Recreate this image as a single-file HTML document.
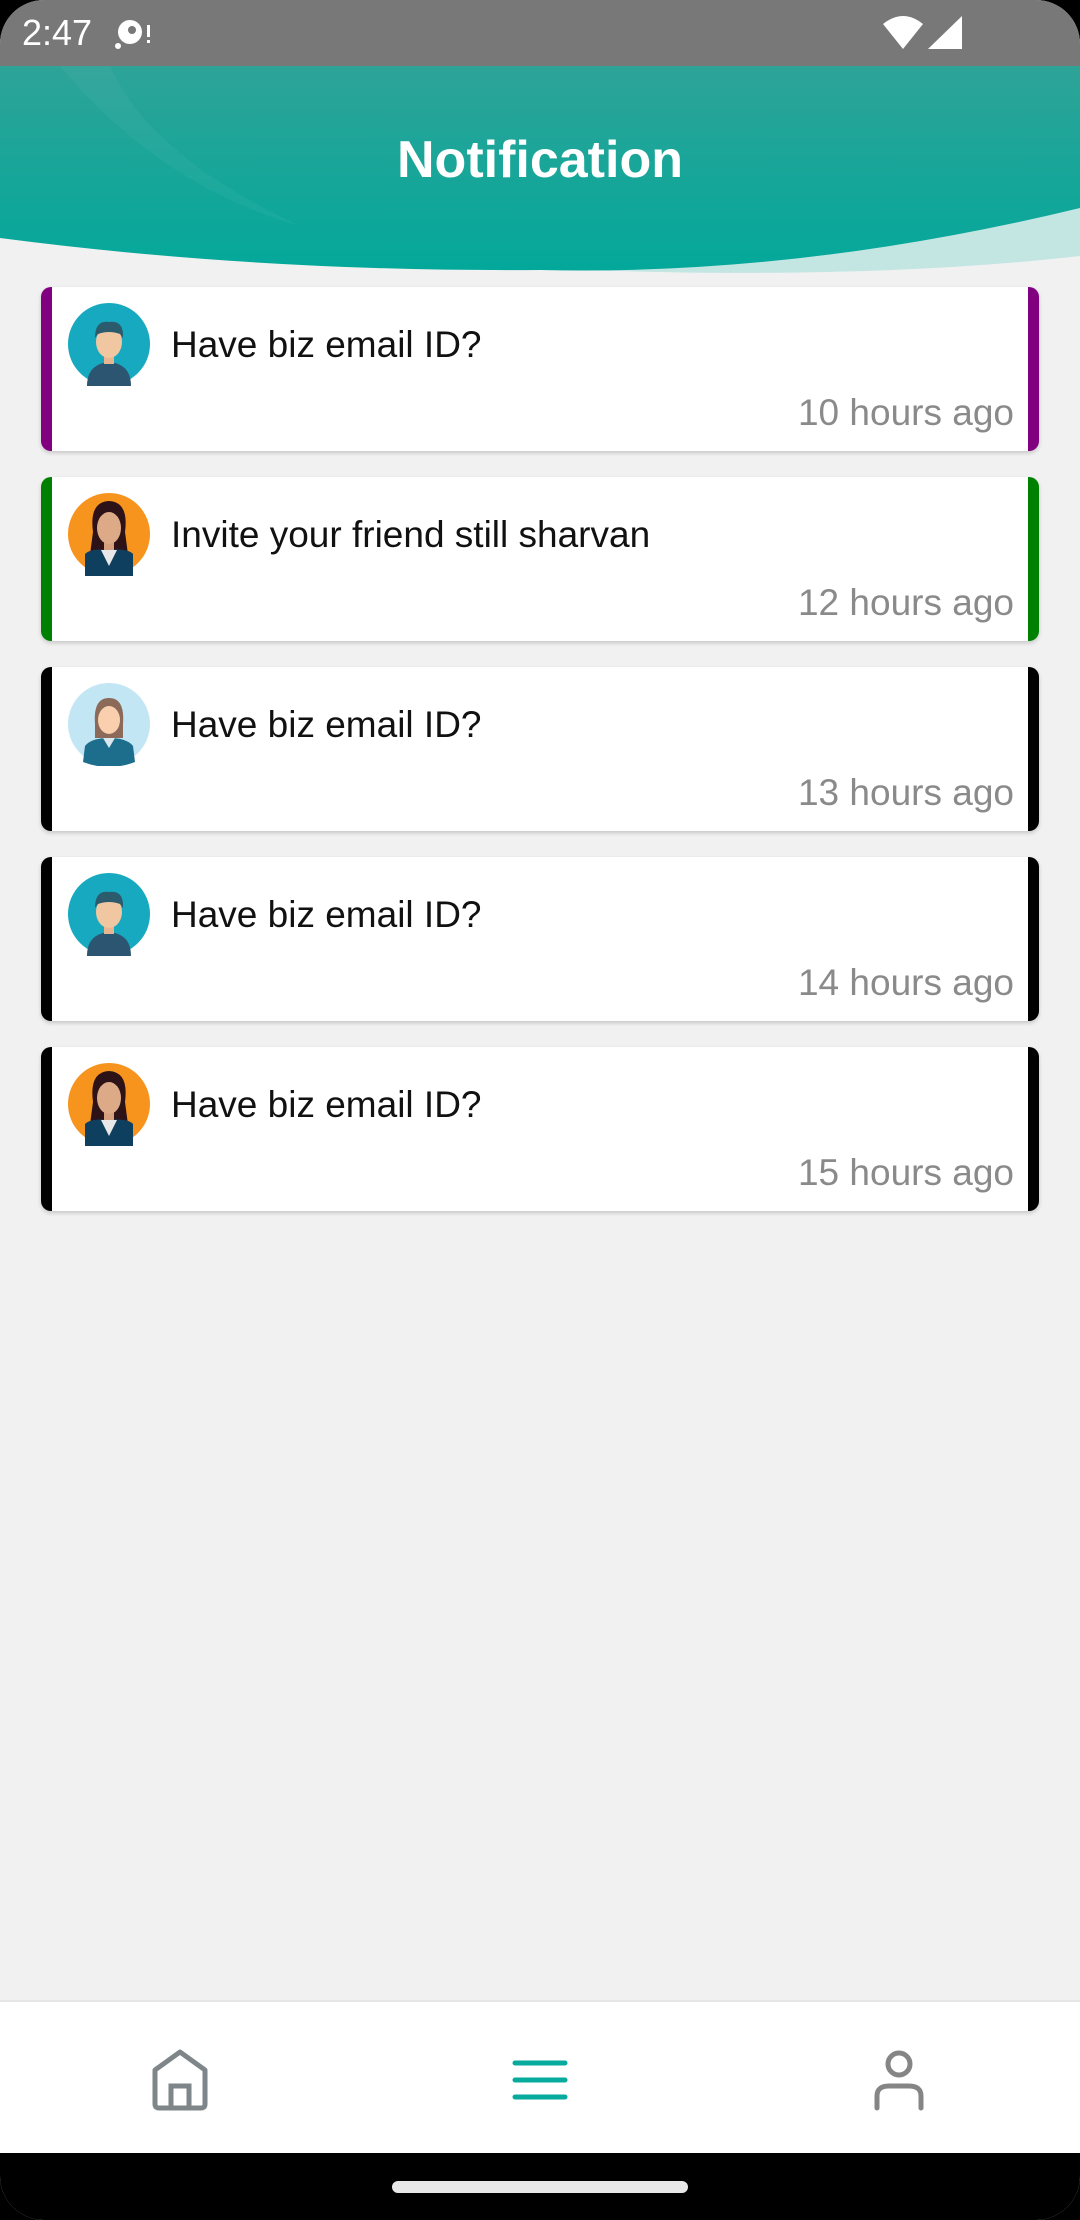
<!DOCTYPE html>
<html><head><meta charset="utf-8"><style>
*{margin:0;padding:0;box-sizing:border-box}
body{width:1080px;height:2220px;background:#000;font-family:"Liberation Sans",Roboto,sans-serif;overflow:hidden;position:relative}
.screen{position:absolute;inset:0;background:#f1f1f1;border-radius:44px 44px 44px 44px;overflow:hidden}
.status{position:absolute;left:0;top:0;width:1080px;height:66px;background:#787878;color:#fff}
.time{position:absolute;left:22px;top:12px;font-size:36px}
.header{position:absolute;left:0;top:66px;width:1080px;height:220px}
.title{position:absolute;top:123px;left:0;width:1080px;text-align:center;color:#fff;font-weight:bold;font-size:52px;line-height:74px}
.card{position:absolute;left:41px;width:998px;height:164px;background:#fff;border-radius:10px;box-shadow:0 2px 4px rgba(0,0,0,.18);border-left:11px solid;border-right:11px solid}
.card svg{position:absolute;left:15px;top:15px}
.msg{position:absolute;left:119px;top:37px;font-size:37px;color:#111}
.ago{position:absolute;right:14px;top:105px;font-size:37px;color:#8a8a8a}
.nav{position:absolute;left:0;top:2000px;width:1080px;height:153px;background:#fff;border-top:2px solid #e6e6e6}
.bar{position:absolute;left:0;top:2153px;width:1080px;height:67px;background:#000}
.pill{position:absolute;left:392px;top:2181px;width:296px;height:12px;border-radius:6px;background:#e8e8e8}
</style></head><body>
<div class="screen">
<div class="status"><span class="time">2:47</span>
<svg style="position:absolute;left:114px;top:17px" width="40" height="34" viewBox="0 0 40 34"><circle cx="16" cy="15" r="12" fill="#fff"/><circle cx="18" cy="13" r="4" fill="#787878"/><circle cx="4" cy="29" r="3" fill="#fff"/><rect x="33" y="8" width="3" height="12" fill="#fff"/><rect x="33" y="23" width="3" height="3" fill="#fff"/></svg>
<svg style="position:absolute;left:880px;top:14px" width="90" height="38" viewBox="0 0 90 38"><path d="M3 10 Q23 -6 43 10 L23 35 Z" fill="#fff"/><path d="M48 35 L82 2 L82 35 Z" fill="#fff"/></svg>
</div>
<svg class="header" width="1080" height="220" viewBox="0 0 1080 220">
<defs><linearGradient id="g" x1="0" y1="0" x2="0" y2="1"><stop offset="0" stop-color="#2ea398"/><stop offset="1" stop-color="#03a89a"/></linearGradient></defs>
<path d="M560 203 Q860 200 1080 140 L1080 190 Q860 215 560 203Z" fill="#c3e6e3"/>
<path d="M0 0 H1080 V142 Q800 210 540 204 Q260 206 0 172 Z" fill="url(#g)"/>
<path d="M60 0 Q160 120 300 160 Q150 90 110 0Z" fill="#fff" opacity=".04"/>
</svg>
<div class="title">Notification</div>

<div class="card" style="top:287px;border-color:#800080">
<svg width="84" height="84" viewBox="0 0 84 84"><circle cx="42" cy="42" r="41" fill="#16a9bf"/><path d="M20 84 Q20 62 42 60 Q64 62 64 84Z" fill="#2b5570"/><rect x="37" y="50" width="10" height="12" fill="#e8b791"/><ellipse cx="42" cy="40" rx="13" ry="16" fill="#f0c7a0"/><path d="M28 36 Q28 18 42 20 Q57 18 56 36 L53 32 Q42 28 31 32Z" fill="#2c5b6e"/></svg>
<div class="msg">Have biz email ID?</div><div class="ago">10 hours ago</div></div>

<div class="card" style="top:477px;border-color:#008000">
<svg width="84" height="84" viewBox="0 0 84 84"><circle cx="42" cy="42" r="41" fill="#f6941e"/><path d="M26 40 Q22 10 42 9 Q62 10 58 40 L62 70 L22 70Z" fill="#2d1217"/><path d="M18 84 L18 62 Q24 56 42 58 Q60 56 66 62 L66 84Z" fill="#0e3f5e"/><path d="M34 58 L42 74 L50 58Z" fill="#e8e8e8"/><rect x="37" y="46" width="10" height="12" fill="#d4a07e"/><ellipse cx="42" cy="36" rx="12" ry="16" fill="#dcaa86"/></svg>
<div class="msg">Invite your friend still sharvan</div><div class="ago">12 hours ago</div></div>

<div class="card" style="top:667px;border-color:#000">
<svg width="84" height="84" viewBox="0 0 84 84"><circle cx="42" cy="42" r="41" fill="#c3e6f5"/><path d="M28 42 Q26 16 42 16 Q58 16 56 42 L56 56 L28 56Z" fill="#8c6a5a"/><path d="M16 80 L18 64 Q24 56 42 56 Q60 56 66 64 L68 80 Q42 90 16 80Z" fill="#1d6e8c"/><path d="M36 56 L42 66 L48 56Z" fill="#dbe7ee"/><ellipse cx="42" cy="38" rx="11" ry="14" fill="#f9cfae"/></svg>
<div class="msg">Have biz email ID?</div><div class="ago">13 hours ago</div></div>

<div class="card" style="top:857px;border-color:#000">
<svg width="84" height="84" viewBox="0 0 84 84"><circle cx="42" cy="42" r="41" fill="#16a9bf"/><path d="M20 84 Q20 62 42 60 Q64 62 64 84Z" fill="#2b5570"/><rect x="37" y="50" width="10" height="12" fill="#e8b791"/><ellipse cx="42" cy="40" rx="13" ry="16" fill="#f0c7a0"/><path d="M28 36 Q28 18 42 20 Q57 18 56 36 L53 32 Q42 28 31 32Z" fill="#2c5b6e"/></svg>
<div class="msg">Have biz email ID?</div><div class="ago">14 hours ago</div></div>

<div class="card" style="top:1047px;border-color:#000">
<svg width="84" height="84" viewBox="0 0 84 84"><circle cx="42" cy="42" r="41" fill="#f6941e"/><path d="M26 40 Q22 10 42 9 Q62 10 58 40 L62 70 L22 70Z" fill="#2d1217"/><path d="M18 84 L18 62 Q24 56 42 58 Q60 56 66 62 L66 84Z" fill="#0e3f5e"/><path d="M34 58 L42 74 L50 58Z" fill="#e8e8e8"/><rect x="37" y="46" width="10" height="12" fill="#d4a07e"/><ellipse cx="42" cy="36" rx="12" ry="16" fill="#dcaa86"/></svg>
<div class="msg">Have biz email ID?</div><div class="ago">15 hours ago</div></div>

<div class="nav">
<svg style="position:absolute;left:150px;top:46px" width="60" height="64" viewBox="0 0 60 64"><path d="M5 22 L30 4 L55 22 V56 Q55 60 51 60 H9 Q5 60 5 56Z" fill="none" stroke="#7f868a" stroke-width="5" stroke-linejoin="round"/><path d="M21 60 V38 H39 V60" fill="none" stroke="#7f868a" stroke-width="5"/></svg>
<svg style="position:absolute;left:512px;top:56px" width="56" height="44" viewBox="0 0 56 44"><g stroke="#06ab9d" stroke-width="5" stroke-linecap="round"><line x1="3" y1="5" x2="53" y2="5"/><line x1="3" y1="22" x2="53" y2="22"/><line x1="3" y1="39" x2="53" y2="39"/></g></svg>
<svg style="position:absolute;left:873px;top:46px" width="52" height="64" viewBox="0 0 52 64"><circle cx="26" cy="16" r="11" fill="none" stroke="#858585" stroke-width="5"/><path d="M4 60 V48 Q4 38 16 38 H36 Q48 38 48 48 V60" fill="none" stroke="#858585" stroke-width="5" stroke-linecap="round"/></svg>
</div>
<div class="bar"></div><div class="pill"></div>
</div>
</body></html>
